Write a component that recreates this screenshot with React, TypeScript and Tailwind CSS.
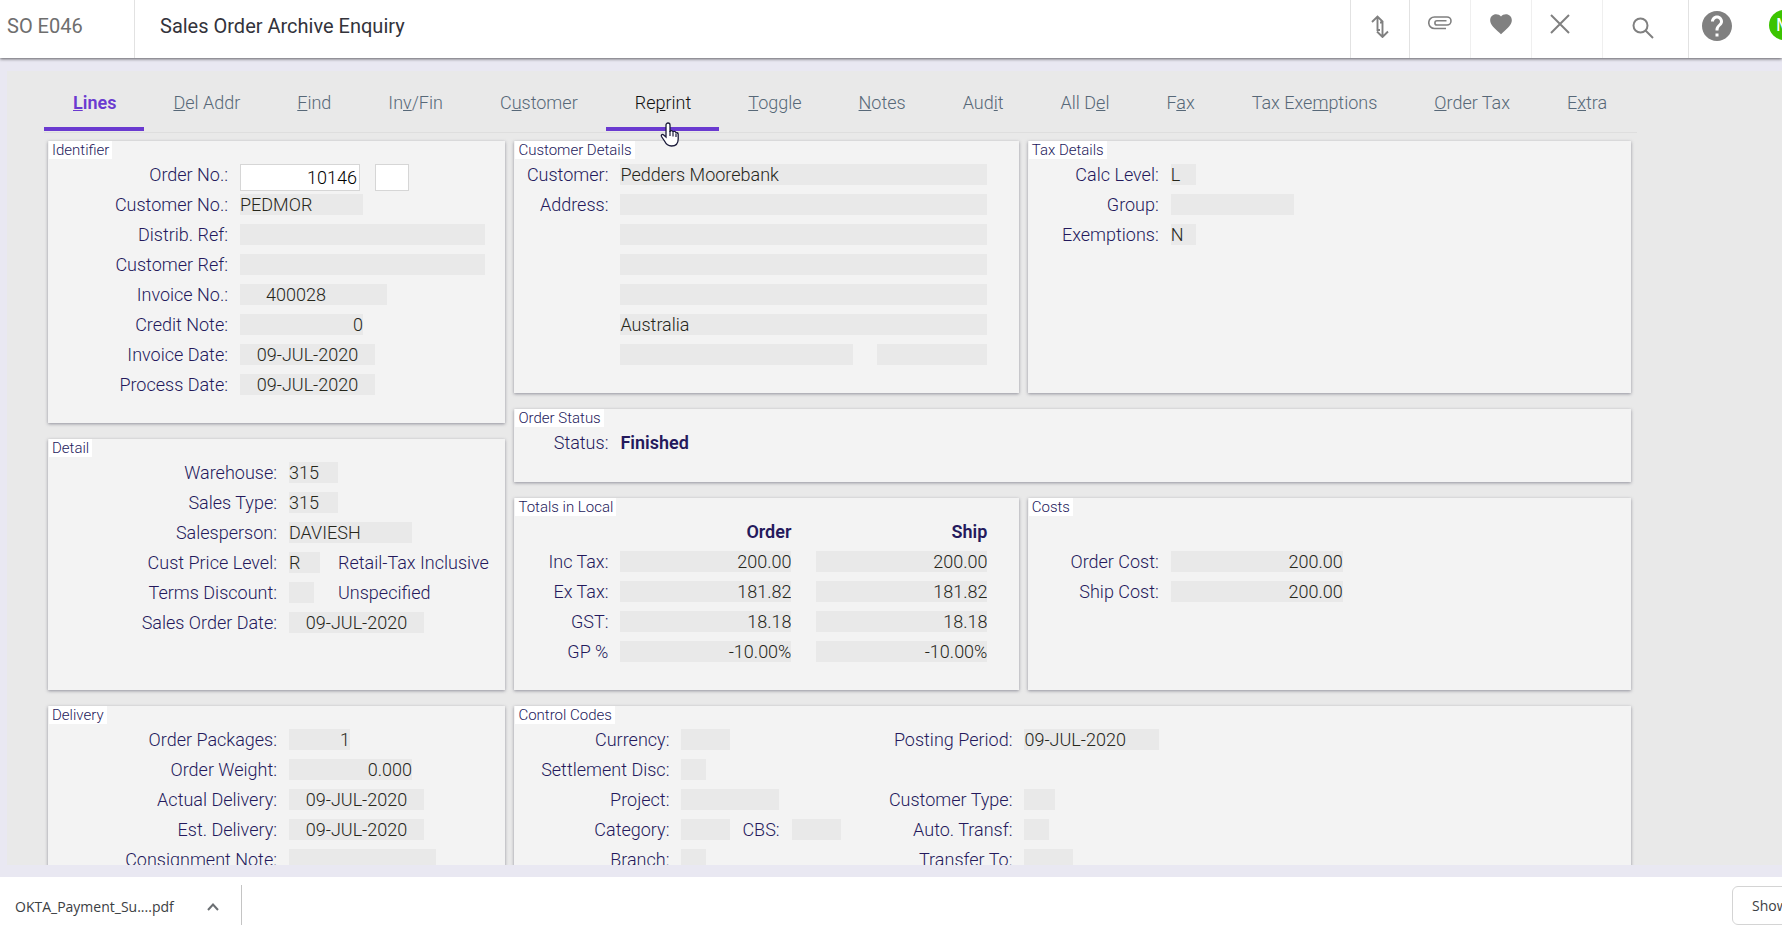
import React, { useState } from "react";
import { MdHelp, MdFavorite } from "react-icons/md";
import { clsx } from "clsx";

type Align = "left" | "right" | "center";

interface FieldProps {
  id: string;
  width: string;
  value?: string;
  label?: string;
  align?: Align;
}

const alignClass: Record<Align, string> = {
  left: "text-left",
  right: "text-right",
  center: "text-center",
};

// Read only value box
const Field = ({ id, width, value = "", label, align = "left" }: FieldProps) => (
  <input
    id={id}
    aria-label={label}
    readOnly
    defaultValue={value}
    className={clsx(
      "block h-[21px] min-w-0 bg-[#e9e9e9] text-[#26261a] outline-none",
      width,
      alignClass[align],
    )}
  />
);

interface RowProps {
  id: string;
  label: string;
  labelWidth: string;
  children: React.ReactNode;
}

const Row = ({ id, label, labelWidth, children }: RowProps) => (
  <div className="flex h-[21px] items-start gap-3">
    <label htmlFor={id} className={clsx("shrink-0 text-right whitespace-nowrap", labelWidth)}>
      {label}
    </label>
    {children}
  </div>
);

interface PanelProps {
  title: string;
  className?: string;
  children: React.ReactNode;
}

const Panel = ({ title, className = "pb-7", children }: PanelProps) => (
  <section
    className={clsx(
      "relative bg-[#f3f3f3] pt-[23px] shadow-[0_1px_3px_rgba(60,60,80,0.5)]",
      className,
    )}
  >
    <h2 className="absolute top-0 left-px bg-white px-[3px] text-[15px] leading-[18px] font-light">
      {title}
    </h2>
    <div className="flex flex-col gap-[9px]">{children}</div>
  </section>
);

// [before, access key, after]
const tabs: [string, string, string][] = [
  ["", "L", "ines"],
  ["", "D", "el Addr"],
  ["", "F", "ind"],
  ["In", "v", "/Fin"],
  ["C", "u", "stomer"],
  ["Re", "p", "rint"],
  ["", "T", "oggle"],
  ["", "N", "otes"],
  ["Aud", "i", "t"],
  ["All D", "e", "l"],
  ["F", "a", "x"],
  ["Tax Exe", "m", "ptions"],
  ["", "O", "rder Tax"],
  ["E", "x", "tra"],
];

const totals = [
  ["Inc Tax:", "200.00", "200.00"],
  ["Ex Tax:", "181.82", "181.82"],
  ["GST:", "18.18", "18.18"],
  ["GP %", "-10.00%", "-10.00%"],
];

const Header = () => (
  <header className="relative z-10 flex h-[58px] shrink-0 bg-white text-xl leading-[52px] font-normal shadow-[0_1px_3px_rgba(0,0,0,0.6)]">
    <div className="w-[135px] shrink-0 border-r border-[#e2e2e2] pl-[7px] text-[#6e6e6e]">
      SO E046
    </div>
    <h1 className="min-w-0 flex-1 truncate pl-[25px] text-[#33333b]">
      Sales Order Archive Enquiry
    </h1>
    <nav className="flex shrink-0 text-[#808080]">
      <button aria-label="Sort" className="flex w-[59px] justify-center border-l border-[#e2e2e2] pt-[15px]">
        <svg width="18" height="23" viewBox="0 0 18 23" fill="none" stroke="currentColor" strokeWidth="1.9">
          <path d="M1 7 6.500 1.500 12 7M6.500 2v13H9M6 16.500 11.500 22 17 16.500M11.500 21V7.500H9" />
        </svg>
      </button>
      <button aria-label="Attachments" className="flex w-[61px] justify-center border-l border-[#e2e2e2] pt-4">
        <svg width="24" height="14" viewBox="0 0 24 14" fill="none" stroke="currentColor" strokeWidth="1.6">
          <path d="M18 12.5H6.5a5.7 5.7 0 0 1 0-11.5H19a4 4 0 0 1 0 8H9a2.1 2.1 0 0 1 0-4.2h9.5" />
        </svg>
      </button>
      <button aria-label="Favourite" className="flex w-[61px] justify-center border-l border-[#efefef] pt-[11px]">
        <MdFavorite size={26} />
      </button>
      <button aria-label="Close" className="flex w-[71px] border-l border-[#efefef] pt-[14px] pl-[18px]">
        <svg width="20" height="20" viewBox="0 0 20 20" fill="none" stroke="currentColor" strokeWidth="2">
          <path d="M1 1 19 19M19 1 1 19" />
        </svg>
      </button>
      <button aria-label="Search" className="flex w-[86px] border-l border-[#efefef] pt-[17px] pl-[29px]">
        <svg width="22" height="22" viewBox="0 0 22 22" fill="none" stroke="currentColor" strokeWidth="2">
          <circle cx="8.5" cy="8.5" r="7" />
          <path d="M13.5 13.5 21 21" />
        </svg>
      </button>
      <button aria-label="Help" className="flex w-[81px] border-l border-[#e2e2e2] pt-2 pl-[10px]">
        <MdHelp size={36} />
      </button>
      <div className="w-[13px] overflow-hidden pt-[10px]">
        <div className="h-[30px] w-[30px] rounded-full bg-[#3cc400] pl-[7px] text-lg leading-[30px] text-white">
          M
        </div>
      </div>
    </nav>
  </header>
);

const PointerHand = () => (
  <svg
    className="pointer-events-none absolute top-[31px] left-[54px] z-20"
    width="19"
    height="25"
    viewBox="0 0 19 25"
  >
    <path
      d="M6 15V3a2 2 0 0 1 4 0v7c0-2 3-2 3 .5 0-1.500 3-1.500 3 .8 0-1 2.200-1 2.200 1V17c0 4-2.200 7-6.700 7-4 0-5.500-2-7-5l-3-4.500c-.8-1.700 1-2.700 2.200-1.600z"
      fill="#fff"
      stroke="#1b1b3a"
      strokeWidth="1.3"
    />
    <path d="M10 9v5M13 10.500v4M16 11.500v3.500" stroke="#1b1b3a" strokeWidth="1.2" />
  </svg>
);

export default function App() {
  const [active, setActive] = useState("Lines");

  return (
    <div className="flex h-screen flex-col overflow-hidden bg-[#e9e8f2] font-[Roboto,sans-serif] text-lg leading-[21px] font-light text-[#24195c]">
      <Header />

      <main className="mt-[13px] mb-3 ml-[7px] min-h-0 flex-1 overflow-hidden bg-[#e9e9e9] pt-5 pr-[145px] pl-[37px]">
        <div className="flex border-b border-[#dedede] pb-px">
          {tabs.map(([before, key, after]) => {
            const name = before + key + after;
            return (
              <button
                key={name}
                onClick={() => setActive(name)}
                className={clsx(
                  "relative border-b-4 pr-7 pb-3 pl-[29px] leading-6 whitespace-nowrap",
                  name === active && "border-[#6a3ad0] font-semibold text-[#6a3ad0]",
                  name === "Reprint" && name !== active && "border-[#6a3ad0] text-[#111111]",
                  name !== "Reprint" && name !== active && "border-transparent text-[#576878]",
                )}
              >
                {before}
                <span className="underline">{key}</span>
                {after}
                {name === "Reprint" && <PointerHand />}
              </button>
            );
          })}
        </div>

        <div className="flex gap-[9px] pt-2 pr-[6px] pl-1">
          <div className="flex min-w-0 flex-[458] flex-col gap-4">
            <Panel title="Identifier">
              <Row id="order-no" label="Order No.:" labelWidth="w-[180px]">
                <input
                  id="order-no"
                  defaultValue="10146"
                  className="h-[27px] w-[120px] border border-[#d6d6d6] bg-white pr-[2px] text-right text-black"
                />
                <input
                  aria-label="Order suffix"
                  className="ml-[3px] h-[27px] w-[34px] border border-[#d6d6d6] bg-white"
                />
              </Row>
              <Row id="customer-no" label="Customer No.:" labelWidth="w-[180px]">
                <Field id="customer-no" width="w-[123px]" value="PEDMOR" />
              </Row>
              <Row id="distrib-ref" label="Distrib. Ref:" labelWidth="w-[180px]">
                <Field id="distrib-ref" width="w-[245px]" />
              </Row>
              <Row id="customer-ref" label="Customer Ref:" labelWidth="w-[180px]">
                <Field id="customer-ref" width="w-[245px]" />
              </Row>
              <Row id="invoice-no" label="Invoice No.:" labelWidth="w-[180px]">
                <Field id="invoice-no" width="w-[147px] pl-[26px]" value="400028" />
              </Row>
              <Row id="credit-note" label="Credit Note:" labelWidth="w-[180px]">
                <Field id="credit-note" width="w-[123px]" value="0" align="right" />
              </Row>
              <Row id="invoice-date" label="Invoice Date:" labelWidth="w-[180px]">
                <Field id="invoice-date" width="w-[135px]" value="09-JUL-2020" align="center" />
              </Row>
              <Row id="process-date" label="Process Date:" labelWidth="w-[180px]">
                <Field id="process-date" width="w-[135px]" value="09-JUL-2020" align="center" />
              </Row>
            </Panel>

            <Panel title="Detail" className="pb-[57px]">
              <Row id="warehouse" label="Warehouse:" labelWidth="w-[229px]">
                <Field id="warehouse" width="w-[49px]" value="315" />
              </Row>
              <Row id="sales-type" label="Sales Type:" labelWidth="w-[229px]">
                <Field id="sales-type" width="w-[49px]" value="315" />
              </Row>
              <Row id="salesperson" label="Salesperson:" labelWidth="w-[229px]">
                <Field id="salesperson" width="w-[123px]" value="DAVIESH" />
              </Row>
              <Row id="price-level" label="Cust Price Level:" labelWidth="w-[229px]">
                <div className="w-[37px] shrink-0">
                  <Field id="price-level" width="w-[31px]" value="R" />
                </div>
                <span className="whitespace-nowrap">Retail-Tax Inclusive</span>
              </Row>
              <Row id="terms-discount" label="Terms Discount:" labelWidth="w-[229px]">
                <div className="w-[37px] shrink-0">
                  <Field id="terms-discount" width="w-[25px]" />
                </div>
                <span>Unspecified</span>
              </Row>
              <Row id="sales-order-date" label="Sales Order Date:" labelWidth="w-[229px]">
                <Field id="sales-order-date" width="w-[135px]" value="09-JUL-2020" align="center" />
              </Row>
            </Panel>

            <Panel title="Delivery">
              <Row id="packages" label="Order Packages:" labelWidth="w-[229px]">
                <Field id="packages" width="w-[61px]" value="1" align="right" />
              </Row>
              <Row id="weight" label="Order Weight:" labelWidth="w-[229px]">
                <Field id="weight" width="w-[123px]" value="0.000" align="right" />
              </Row>
              <Row id="actual-delivery" label="Actual Delivery:" labelWidth="w-[229px]">
                <Field id="actual-delivery" width="w-[135px]" value="09-JUL-2020" align="center" />
              </Row>
              <Row id="est-delivery" label="Est. Delivery:" labelWidth="w-[229px]">
                <Field id="est-delivery" width="w-[135px]" value="09-JUL-2020" align="center" />
              </Row>
              <Row id="consignment" label="Consignment Note:" labelWidth="w-[229px]">
                <Field id="consignment" width="w-[147px]" />
              </Row>
            </Panel>
          </div>

          <div className="grid min-w-0 flex-[1118] grid-cols-[505fr_604fr] content-start gap-x-[9px] gap-y-4">
            <Panel title="Customer Details">
              <Row id="customer" label="Customer:" labelWidth="w-[94px]">
                <Field id="customer" width="w-[367px]" value="Pedders Moorebank" />
              </Row>
              <Row id="address-1" label="Address:" labelWidth="w-[94px]">
                <Field id="address-1" width="w-[367px]" />
              </Row>
              {["", "", "", "Australia"].map((value, i) => (
                <div key={i} className="pl-[106px]">
                  <Field
                    id={`address-${i + 2}`}
                    label={`Address line ${i + 2}`}
                    width="w-[367px]"
                    value={value}
                  />
                </div>
              ))}
              <div className="flex gap-6 pl-[106px]">
                <Field id="state" label="State" width="w-[233px]" />
                <Field id="postcode" label="Postcode" width="w-[110px]" />
              </div>
            </Panel>

            <Panel title="Tax Details">
              <Row id="calc-level" label="Calc Level:" labelWidth="w-[131px]">
                <Field id="calc-level" width="w-[25px]" value="L" />
              </Row>
              <Row id="group" label="Group:" labelWidth="w-[131px]">
                <Field id="group" width="w-[123px]" />
              </Row>
              <Row id="exemptions" label="Exemptions:" labelWidth="w-[131px]">
                <Field id="exemptions" width="w-[25px]" value="N" />
              </Row>
            </Panel>

            <Panel title="Order Status" className="col-span-2 pb-[29px]">
              <div className="flex gap-3">
                <span className="w-[94px] text-right">Status:</span>
                <strong className="font-semibold">Finished</strong>
              </div>
            </Panel>

            <Panel title="Totals in Local" className="pb-[19px]">
              <table className="w-[473px] table-fixed">
                <thead>
                  <tr className="h-[30px] align-top">
                    <td className="w-[106px]" />
                    <th scope="col" className="w-[171px] text-right font-semibold">
                      Order
                    </th>
                    <th scope="col" className="text-right font-semibold">
                      Ship
                    </th>
                  </tr>
                </thead>
                <tbody>
                  {totals.map(([label, order, ship]) => (
                    <tr key={label} className="h-[30px] align-top">
                      <th scope="row" className="pr-3 text-right font-light">
                        {label}
                      </th>
                      <td>
                        <Field id={`order-${label}`} label={`Order ${label}`} width="w-full" value={order} align="right" />
                      </td>
                      <td className="pl-[25px]">
                        <Field id={`ship-${label}`} label={`Ship ${label}`} width="w-full" value={ship} align="right" />
                      </td>
                    </tr>
                  ))}
                </tbody>
              </table>
            </Panel>

            <Panel title="Costs">
              <div className="h-[21px]" />
              <Row id="order-cost" label="Order Cost:" labelWidth="w-[131px]">
                <Field id="order-cost" width="w-[172px]" value="200.00" align="right" />
              </Row>
              <Row id="ship-cost" label="Ship Cost:" labelWidth="w-[131px]">
                <Field id="ship-cost" width="w-[172px]" value="200.00" align="right" />
              </Row>
            </Panel>

            <Panel title="Control Codes" className="col-span-2 pb-7">
              <div className="flex">
                <div className="flex w-[343px] flex-col gap-[9px]">
                  <Row id="currency" label="Currency:" labelWidth="w-[155px]">
                    <Field id="currency" width="w-[49px]" />
                  </Row>
                  <Row id="settlement" label="Settlement Disc:" labelWidth="w-[155px]">
                    <Field id="settlement" width="w-[25px]" />
                  </Row>
                  <Row id="project" label="Project:" labelWidth="w-[155px]">
                    <Field id="project" width="w-[98px]" />
                  </Row>
                  <Row id="category" label="Category:" labelWidth="w-[155px]">
                    <Field id="category" width="w-[49px]" />
                    <label htmlFor="cbs">CBS:</label>
                    <Field id="cbs" width="w-[49px]" />
                  </Row>
                  <Row id="branch" label="Branch:" labelWidth="w-[155px]">
                    <Field id="branch" width="w-[25px]" />
                  </Row>
                </div>
                <div className="flex flex-col gap-[9px]">
                  <Row id="posting" label="Posting Period:" labelWidth="w-[155px]">
                    <Field id="posting" width="w-[135px]" value="09-JUL-2020" />
                  </Row>
                  <div className="h-[21px]" />
                  <Row id="customer-type" label="Customer Type:" labelWidth="w-[155px]">
                    <Field id="customer-type" width="w-[31px]" />
                  </Row>
                  <Row id="auto-transf" label="Auto. Transf:" labelWidth="w-[155px]">
                    <Field id="auto-transf" width="w-[25px]" />
                  </Row>
                  <Row id="transfer-to" label="Transfer To:" labelWidth="w-[155px]">
                    <Field id="transfer-to" width="w-[49px]" />
                  </Row>
                </div>
              </div>
            </Panel>
          </div>
        </div>
      </main>

      <footer className="flex h-12 shrink-0 items-end justify-between bg-white font-['Open_Sans','Noto_Sans',sans-serif] text-sm font-normal text-[#3c4043]">
        <div className="flex h-10 items-center border-r border-[#c4c4c4] pt-1 pr-[22px] pl-[15px]">
          <a href="#download">OKTA_Payment_Su....pdf</a>
          <button aria-label="Download options" className="ml-[33px]">
            <svg width="12" height="8" viewBox="0 0 12 8" fill="none" stroke="#6b6f73" strokeWidth="2">
              <path d="M1 7 6 1.500 11 7" />
            </svg>
          </button>
        </div>
        <div className="w-[50px] overflow-hidden">
          <button className="h-[39px] w-[100px] rounded-md border border-[#d4d4d4] pl-[19px] text-left whitespace-nowrap">
            Show all
          </button>
        </div>
      </footer>
    </div>
  );
}
